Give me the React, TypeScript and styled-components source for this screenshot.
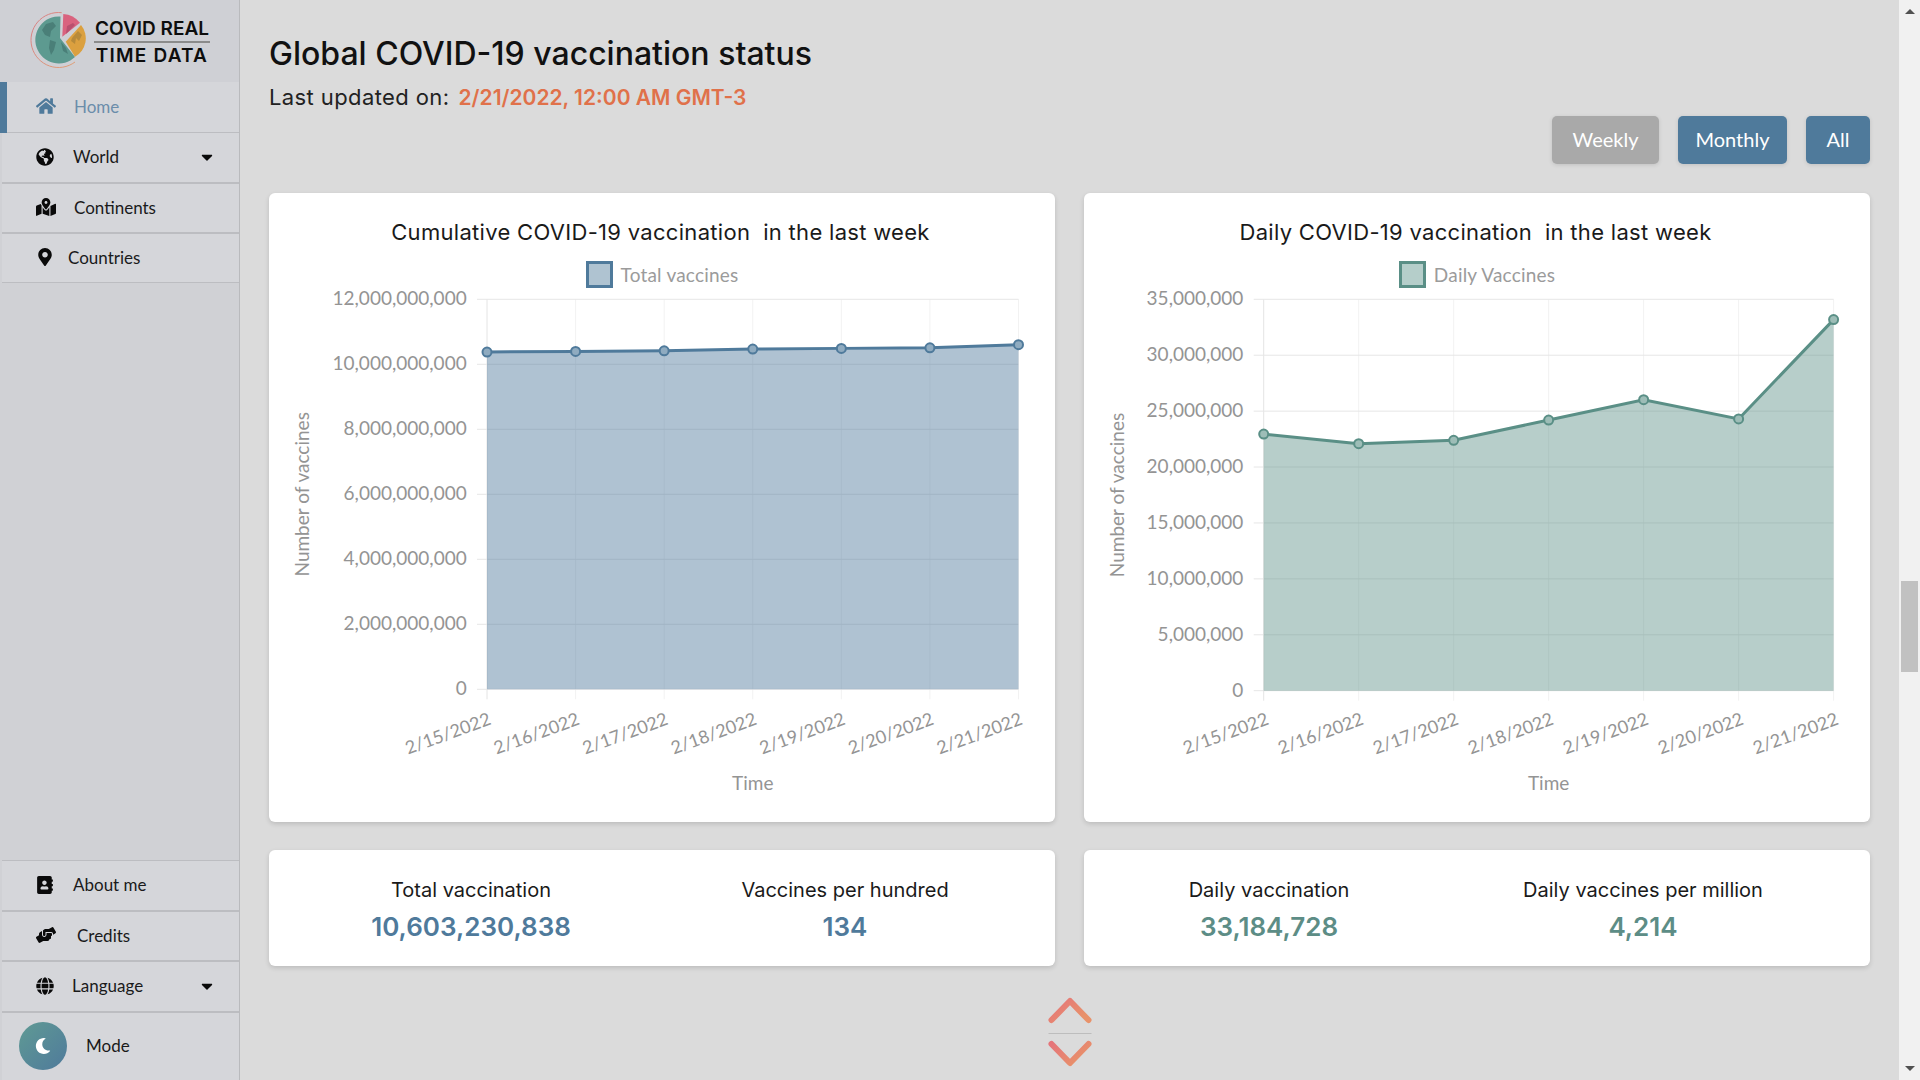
import React from "react";
import styled, { createGlobalStyle } from "styled-components";
import {
  FaHome, FaGlobeAmericas, FaMapMarkedAlt, FaMapMarkerAlt, FaAddressBook,
  FaHandsHelping, FaGlobe, FaCaretDown, FaMoon,
} from "react-icons/fa";

const BODY = `"Lato", "Noto Sans", sans-serif`;
const HEAD = `"Inter", "Noto Sans", sans-serif`;
const BLUE = "#4f7a9b";
const GREEN = "#5a8f86";

const Global = createGlobalStyle`
  html, body { margin: 0; padding: 0; height: 100%; overflow: hidden; background: #dbdbdb; }
  * { box-sizing: border-box; }
`;

const Page = styled.div`
  display: flex;
  width: 1920px;
  height: 1080px;
  overflow: hidden;
  background: #dbdbdb;
  font-family: ${BODY};
`;

/* ---------- sidebar ---------- */
const Sidebar = styled.aside`
  flex: 0 0 240px;
  display: flex;
  flex-direction: column;
  background: #d0d1d5;
  border-right: 1px solid #b9babd;
`;
const Brand = styled.div`
  height: 82px;
  display: flex;
  align-items: flex-start;
  padding: 10px 0 0 30px;
  background: #cfd0d5;
`;
const BrandMark = styled.svg`
  width: 60px;
  height: 60px;
  display: block;
  flex: none;
`;
const BrandText = styled.div`
  margin: 8px 0 0 4px;
  width: 116px;
  display: flex;
  flex-direction: column;
  font-family: ${HEAD};
  font-weight: 600;
  font-size: 19px;
  line-height: 22px;
  color: #0d0d0d;
  text-align: center;
  white-space: nowrap;
`;
const BrandTop = styled.span`
  padding-bottom: 1px;
  border-bottom: 2px solid #8b8b8b;
`;
const BrandBottom = styled.span`
  letter-spacing: 1.2px;
  padding-top: 2px;
`;
const Nav = styled.nav`
  display: flex;
  flex-direction: column;
`;
const Spacer = styled.div`
  flex: 1;
`;
const Row = styled.div<{ $active?: boolean; $h: number; $rule: number }>`
  position: relative;
  flex: none;
  height: ${(p) => p.$h}px;
  margin-left: ${(p) => (p.$active ? 0 : 2)}px;
  display: flex;
  align-items: center;
  padding: 0 23px 2px ${(p) => (p.$active ? 36 : 34)}px;
  background: #d5d6da;
  border-bottom: ${(p) => p.$rule}px solid #bcbdc1;
  color: ${(p) => (p.$active ? "#6b8daa" : "#1a1a1a")};
  font-size: 17px;
`;
const ActiveBar = styled.span`
  position: absolute;
  left: 0;
  top: 0;
  bottom: -1px;
  width: 7px;
  background: ${BLUE};
`;
const RowIcon = styled.span<{ $active?: boolean }>`
  width: 20px;
  display: flex;
  align-items: center;
  color: ${(p) => (p.$active ? BLUE : "#0a0a0a")};
  flex: none;
  svg {
    width: auto;
    flex: none;
  }
`;
const RowLabel = styled.span<{ $gap: number }>`
  margin-left: ${(p) => p.$gap}px;
  flex: 1;
  white-space: nowrap;
`;
const Caret = styled.span`
  display: flex;
  color: #0a0a0a;
`;
const TopRule = styled.div`
  height: 1px;
  margin-left: 2px;
  background: #bcbdc1;
`;
const ModeRow = styled.div`
  flex: none;
  height: 67px;
  margin-left: 2px;
  display: flex;
  align-items: center;
  padding: 0 0 2px 17px;
  background: #d5d6da;
  font-size: 17px;
  color: #1a1a1a;
`;
const ModeButton = styled.span`
  width: 48px;
  height: 48px;
  border-radius: 50%;
  display: flex;
  align-items: center;
  justify-content: center;
  color: #fff;
  background: linear-gradient(135deg, #5f9a94, ${BLUE});
`;
const ModeLabel = styled.span`
  margin-left: 19px;
`;

/* ---------- main ---------- */
const Main = styled.main`
  flex: 1;
  min-width: 0;
  display: flex;
  flex-direction: column;
  padding: 32px 29px 0 29px;
`;
const Title = styled.h1`
  margin: 0;
  font-family: ${HEAD};
  font-weight: 500;
  font-size: 32px;
  line-height: 44px;
  color: #111;
  white-space: nowrap;
`;
const Updated = styled.div`
  margin-top: 6px;
  height: 30px;
  display: flex;
  align-items: baseline;
  gap: 9px;
  font-family: ${HEAD};
  font-size: 22px;
  line-height: 30px;
  letter-spacing: 0.4px;
  color: #222;
`;
const UpdatedValue = styled.span`
  color: #e0714a;
  font-weight: 600;
  font-size: 21px;
  letter-spacing: 0;
`;
const Controls = styled.div`
  margin-top: 4px;
  display: flex;
  justify-content: flex-end;
  gap: 19px;
`;
const RangeButton = styled.button<{ $muted?: boolean; $w: number }>`
  width: ${(p) => p.$w}px;
  height: 48px;
  padding: 0 0 2px;
  border: 0;
  border-radius: 5px;
  background: ${(p) => (p.$muted ? "#a9a9a9" : BLUE)};
  color: #fff;
  font-family: ${BODY};
  font-size: 20px;
  box-shadow: 0 1px 4px rgba(0, 0, 0, 0.12);
`;
const Grid = styled.div`
  margin-top: 29px;
  display: grid;
  grid-template-columns: 786px 786px;
  column-gap: 29px;
  row-gap: 28px;
`;
const Card = styled.section`
  background: #fff;
  border-radius: 6px;
  box-shadow: 0 2px 5px rgba(0, 0, 0, 0.14);
`;
const ChartCard = styled(Card)`
  height: 629px;
  padding-top: 25px;
  display: flex;
  flex-direction: column;
`;
const ChartTitle = styled.h2`
  margin: 0;
  padding-right: 3px;
  font-family: ${HEAD};
  font-weight: 400;
  font-size: 22px;
  line-height: 28px;
  letter-spacing: 0.3px;
  color: #1a1a1a;
  text-align: center;
  white-space: pre;
`;
const Legend = styled.div`
  margin-top: 14px;
  height: 29px;
  display: flex;
  justify-content: center;
  align-items: center;
  gap: 8px;
  font-size: 19px;
  letter-spacing: 0.2px;
  color: #9b9b9b;
`;
const Swatch = styled.span<{ $line: string; $fill: string }>`
  width: 27px;
  height: 27px;
  border: 3px solid ${(p) => p.$line};
  background: ${(p) => p.$fill};
`;
const ChartSvg = styled.svg`
  display: block;
  flex: none;
`;
const AxisText = styled.text`
  font-family: ${BODY};
  font-size: 19px;
  fill: #949494;
`;
const DateText = styled(AxisText)`
  font-size: 18px;
`;
const StatCard = styled(Card)<{ $offset: number }>`
  height: 116px;
  padding: 24px 0 0 ${(p) => p.$offset}px;
  display: grid;
  grid-template-columns: 300px 300px;
  column-gap: 74px;
  align-content: start;
`;
const Stat = styled.div`
  display: flex;
  flex-direction: column;
  align-items: center;
  white-space: nowrap;
`;
const StatLabel = styled.div`
  font-family: ${HEAD};
  font-size: 20px;
  line-height: 32px;
  color: #1a1a1a;
`;
const StatValue = styled.div<{ $color: string }>`
  margin-top: 3px;
  font-family: ${HEAD};
  font-weight: 600;
  font-size: 26px;
  line-height: 36px;
  color: ${(p) => p.$color};
`;
const Pager = styled.div`
  margin-top: 30px;
  display: flex;
  justify-content: center;
`;
const PagerSvg = styled.svg`
  display: block;
  width: 48px;
  height: 74px;
`;

/* ---------- scrollbar ---------- */
const Rail = styled.div`
  flex: 0 0 21px;
  display: flex;
  flex-direction: column;
  align-items: center;
  background: #f1f1f1;
`;
const ArrowUp = styled.span`
  margin-top: 9px;
  width: 0;
  height: 0;
  border-left: 5px solid transparent;
  border-right: 5px solid transparent;
  border-bottom: 5px solid #505050;
`;
const ArrowDown = styled.span`
  margin-bottom: 9px;
  width: 0;
  height: 0;
  border-left: 5px solid transparent;
  border-right: 5px solid transparent;
  border-top: 5px solid #505050;
`;
const Thumb = styled.div`
  margin-top: 567px;
  width: 17px;
  height: 91px;
  background: #c1c1c1;
`;
const RailFill = styled.div`
  flex: 1;
`;

/* ---------- chart ---------- */
const DATES = ["2/15/2022", "2/16/2022", "2/17/2022", "2/18/2022", "2/19/2022", "2/20/2022", "2/21/2022"];

type ChartProps = {
  originX: number;
  left: number;
  right: number;
  top: number;
  bottom: number;
  max: number;
  step: number;
  values: number[];
  line: string;
  fill: string;
  gradient: string;
  labelEnd: number;
  axisX: number;
  labelDx: number;
};

function Chart(p: ChartProps) {
  const W = 786;
  const H = 533;
  const oy = 289;
  const xs = DATES.map((_, i) => p.left + ((p.right - p.left) * i) / 6);
  const y = (v: number) => p.bottom - ((p.bottom - p.top) * v) / p.max;
  const ticks: number[] = [];
  for (let v = 0; v <= p.max; v += p.step) ticks.push(v);
  const pts = p.values.map((v, i) => `${xs[i]},${y(v)}`).join(" ");
  return (
    <ChartSvg width={W} height={H} viewBox={`${p.originX} ${oy} ${W} ${H}`}>
      {xs.map((x, i) => (
        <line key={x} x1={x} x2={x} y1={p.top} y2={p.bottom + 10} stroke={i === 0 ? "#e4e4e4" : "#f2f2f2"} strokeWidth={1} />
      ))}
      {ticks.map((v) => (
        <line key={v} x1={p.left - 10} x2={p.right} y1={y(v)} y2={y(v)} stroke="#e6e6e6" strokeWidth={1} />
      ))}
      <polygon points={`${p.left},${p.bottom} ${pts} ${p.right},${p.bottom}`} fill={p.fill} />
      <polyline points={pts} fill="none" stroke={p.line} strokeWidth={3} />
      {p.values.map((v, i) => (
        <circle key={i} cx={xs[i]} cy={y(v)} r={4.5} fill={p.gradient} stroke={p.line} strokeWidth={2} />
      ))}
      {ticks.map((v) => (
        <AxisText key={v} x={p.labelEnd} y={y(v) + 6} textAnchor="end">
          {v.toLocaleString("en-US")}
        </AxisText>
      ))}
      {DATES.map((d, i) => (
        <DateText
          key={d}
          textAnchor="end"
          transform={`translate(${xs[i] + p.labelDx} 724) rotate(-20)`}
        >
          {d}
        </DateText>
      ))}
      <AxisText
        textAnchor="middle"
        transform={`translate(${p.axisX} ${(p.top + p.bottom) / 2}) rotate(-90)`}
      >
        Number of vaccines
      </AxisText>
      <AxisText x={(p.left + p.right) / 2} y={790} textAnchor="middle">
        Time
      </AxisText>
    </ChartSvg>
  );
}

function Logo() {
  return (
    <BrandMark viewBox="30 10 60 60" aria-hidden>
      <defs>
        <linearGradient id="ring" x1="0" y1="0" x2="1" y2="1">
          <stop offset="0" stopColor="#d9737c" />
          <stop offset="1" stopColor="#e09a6a" />
        </linearGradient>
      </defs>
      <path d="M61.7 12.7 A27.5 27.5 0 1 0 75 62" fill="none" stroke="url(#ring)" strokeWidth={0.9} />
      <path d="M60 38 L60.5 16.5 A23.5 23.5 0 1 0 75 57 Z" fill="#5d9a90" />
      <path d="M46 24 l7 -2 l3 4 l-5 5 l-1 6 l-5 -2 l-3 -5 Z M50 40 l6 2 l-2 8 l-3 5 l-2 -7 Z M61 42 l5 6 l2 6 l-5 -3 Z" fill="#4a7f78" />
      <path d="M62.3 36.7 L63.3 14 A24 24 0 0 1 80 22.7 Z" fill="#d9637f" />
      <path d="M67 26 l6 -3 l2 2 l-5 5 l-4 4 Z" fill="#b9506f" />
      <path d="M65.7 41.7 L81 25 A21 21 0 0 1 75 56.7 Z" fill="#dba03f" />
      <path d="M72 38 l6 -7 l4 4 l-3 6 l-3 -3 l-1 6 l-4 -3 Z" fill="#b78a3a" />
    </BrandMark>
  );
}

export default function App() {
  return (
    <Page>
      <Global />
      <Sidebar>
        <Brand>
          <Logo />
          <BrandText>
            <BrandTop>COVID REAL</BrandTop>
            <BrandBottom>TIME DATA</BrandBottom>
          </BrandText>
        </Brand>
        <Nav>
          <Row $active $h={51} $rule={1}>
            <ActiveBar />
            <RowIcon $active><FaHome size={20} /></RowIcon>
            <RowLabel $gap={18}>Home</RowLabel>
          </Row>
          <Row $h={51} $rule={2}>
            <RowIcon><FaGlobeAmericas size={18} /></RowIcon>
            <RowLabel $gap={17}>World</RowLabel>
            <Caret><FaCaretDown size={18} /></Caret>
          </Row>
          <Row $h={50} $rule={2}>
            <RowIcon><FaMapMarkedAlt size={20} /></RowIcon>
            <RowLabel $gap={18}>Continents</RowLabel>
          </Row>
          <Row $h={49} $rule={1}>
            <RowIcon><FaMapMarkerAlt size={18} /></RowIcon>
            <RowLabel $gap={12}>Countries</RowLabel>
          </Row>
        </Nav>
        <Spacer />
        <Nav>
          <TopRule />
          <Row $h={51} $rule={2}>
            <RowIcon><FaAddressBook size={18} /></RowIcon>
            <RowLabel $gap={17}>About me</RowLabel>
          </Row>
          <Row $h={50} $rule={2}>
            <RowIcon><FaHandsHelping size={20} /></RowIcon>
            <RowLabel $gap={21}>Credits</RowLabel>
          </Row>
          <Row $h={51} $rule={2}>
            <RowIcon><FaGlobe size={18} /></RowIcon>
            <RowLabel $gap={16}>Language</RowLabel>
            <Caret><FaCaretDown size={18} /></Caret>
          </Row>
        </Nav>
        <ModeRow>
          <ModeButton><FaMoon size={16} /></ModeButton>
          <ModeLabel>Mode</ModeLabel>
        </ModeRow>
      </Sidebar>

      <Main>
        <Title>Global COVID-19 vaccination status</Title>
        <Updated>
          <span>Last updated on:</span>
          <UpdatedValue>2/21/2022, 12:00 AM GMT-3</UpdatedValue>
        </Updated>
        <Controls>
          <RangeButton $muted $w={107}>Weekly</RangeButton>
          <RangeButton $w={109}>Monthly</RangeButton>
          <RangeButton $w={64}>All</RangeButton>
        </Controls>
        <Grid>
          <ChartCard>
            <ChartTitle>Cumulative COVID-19 vaccination  in the last week</ChartTitle>
            <Legend>
              <Swatch $line={BLUE} $fill="#afc3d1" />
              Total vaccines
            </Legend>
            <Chart
              originX={269}
              left={487}
              right={1018.5}
              top={299.3}
              bottom={689.3}
              max={12000000000}
              step={2000000000}
              values={[10378000000, 10397000000, 10415000000, 10470000000, 10490000000, 10507000000, 10603230838]}
              line={BLUE}
              fill="rgba(79,122,155,0.455)"
              gradient="#8fabc0"
              labelEnd={466.7}
              axisX={309}
              labelDx={5}
            />
          </ChartCard>
          <ChartCard>
            <ChartTitle>Daily COVID-19 vaccination  in the last week</ChartTitle>
            <Legend>
              <Swatch $line={GREEN} $fill="#b5ceca" />
              Daily Vaccines
            </Legend>
            <Chart
              originX={1084}
              left={1263.7}
              right={1833.6}
              top={299.3}
              bottom={690.7}
              max={35000000}
              step={5000000}
              values={[22950000, 22090000, 22390000, 24200000, 26020000, 24300000, 33184728]}
              line={GREEN}
              fill="rgba(90,143,134,0.44)"
              gradient="#9dbdb7"
              labelEnd={1243.4}
              axisX={1124}
              labelDx={6}
            />
          </ChartCard>
          <StatCard $offset={52}>
            <Stat>
              <StatLabel>Total vaccination</StatLabel>
              <StatValue $color={BLUE}>10,603,230,838</StatValue>
            </Stat>
            <Stat>
              <StatLabel>Vaccines per hundred</StatLabel>
              <StatValue $color={BLUE}>134</StatValue>
            </Stat>
          </StatCard>
          <StatCard $offset={35}>
            <Stat>
              <StatLabel>Daily vaccination</StatLabel>
              <StatValue $color="#5d8d86">33,184,728</StatValue>
            </Stat>
            <Stat>
              <StatLabel>Daily vaccines per million</StatLabel>
              <StatValue $color="#5d8d86">4,214</StatValue>
            </Stat>
          </StatCard>
        </Grid>
        <Pager>
          <PagerSvg viewBox="0 0 48 74" aria-hidden>
            <defs>
              <linearGradient id="chev" x1="0" y1="0" x2="1" y2="0.6">
                <stop offset="0" stopColor="#e5757a" />
                <stop offset="1" stopColor="#e8926a" />
              </linearGradient>
            </defs>
            <path d="M5.5 24 L24 5 L42.5 24" fill="none" stroke="url(#chev)" strokeWidth={6} strokeLinecap="round" strokeLinejoin="round" />
            <line x1="2.5" x2="45.5" y1="37.5" y2="37.5" stroke="#bdbdbd" strokeWidth={1} />
            <path d="M5.5 48 L24 67 L42.5 48" fill="none" stroke="url(#chev)" strokeWidth={6} strokeLinecap="round" strokeLinejoin="round" />
          </PagerSvg>
        </Pager>
      </Main>

      <Rail>
        <ArrowUp />
        <Thumb />
        <RailFill />
        <ArrowDown />
      </Rail>
    </Page>
  );
}
